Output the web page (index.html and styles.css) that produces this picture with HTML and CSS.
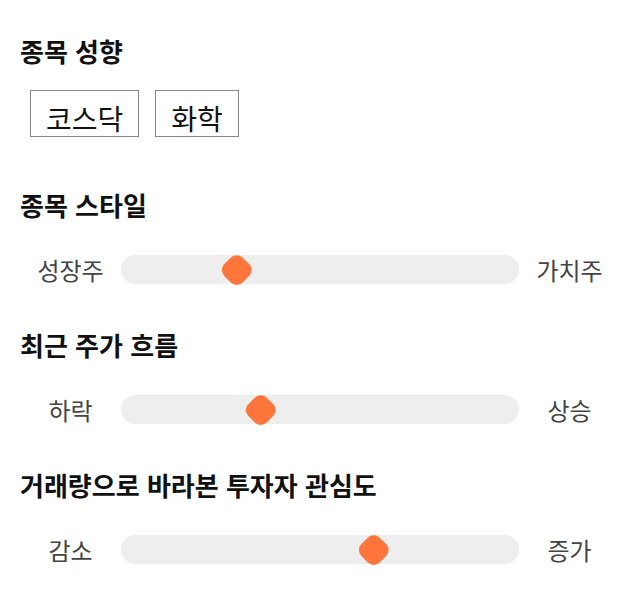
FILE: index.html
```html
<!DOCTYPE html>
<html lang="ko">
<head>
<meta charset="utf-8">
<title>종목 성향</title>
<link rel="stylesheet" href="styles.css">
</head>
<body>
<main class="page">
  <section class="group">
    <h2 class="title">종목 성향</h2>
    <div class="tags">
      <span class="tag">코스닥</span>
      <span class="tag">화학</span>
    </div>
  </section>

  <section class="group">
    <h2 class="title">종목 스타일</h2>
    <div class="slider">
      <span class="label">성장주</span>
      <div class="track"><span class="thumb" style="left: 101.5px"></span></div>
      <span class="label">가치주</span>
    </div>
  </section>

  <section class="group">
    <h2 class="title">최근 주가 흐름</h2>
    <div class="slider">
      <span class="label">하락</span>
      <div class="track"><span class="thumb" style="left: 125px"></span></div>
      <span class="label">상승</span>
    </div>
  </section>

  <section class="group">
    <h2 class="title">거래량으로 바라본 투자자 관심도</h2>
    <div class="slider">
      <span class="label">감소</span>
      <div class="track"><span class="thumb" style="left: 238.5px"></span></div>
      <span class="label">증가</span>
    </div>
  </section>
</main>
</body>
</html>
```

FILE: styles.css
```css
html, body {
  margin: 0;
  padding: 0;
  background: #ffffff;
}

body {
  font-family: "Noto Sans CJK KR", "Noto Sans", sans-serif;
  color: #111111;
}

.page {
  padding: 33px 20px 20px 20px;
  display: flex;
  flex-direction: column;
}

.group + .group {
  margin-top: 43px;
}

.group:nth-child(2) {
  margin-top: 50px;
}

.title {
  margin: 0;
  font-size: 26px;
  line-height: 36px;
  font-weight: 700;
  color: #111111;
}

.tags {
  display: flex;
  gap: 16px;
  margin-top: 21px;
  padding-left: 10px;
}

.tag {
  display: block;
  border: 1px solid #888888;
  padding: 9px 15px 0 15px;
  font-size: 28px;
  line-height: 36px;
  color: #111111;
  background: #ffffff;
}

.slider {
  display: flex;
  align-items: center;
  margin-top: 32px;
  height: 29px;
}

.label {
  width: 101px;
  flex: none;
  text-align: center;
  font-size: 24px;
  line-height: 29px;
  color: #444444;
}

.track {
  position: relative;
  flex: 1;
  height: 29px;
  background: #eeeeee;
  border-radius: 15px;
}

.thumb {
  position: absolute;
  top: 0;
  width: 29px;
  height: 29px;
  display: flex;
  align-items: center;
  justify-content: center;
}

.thumb::before {
  content: "";
  width: 25.5px;
  height: 25.5px;
  flex: none;
  background: #ff763c;
  border-radius: 8.5px;
  transform: rotate(45deg);
}
```
